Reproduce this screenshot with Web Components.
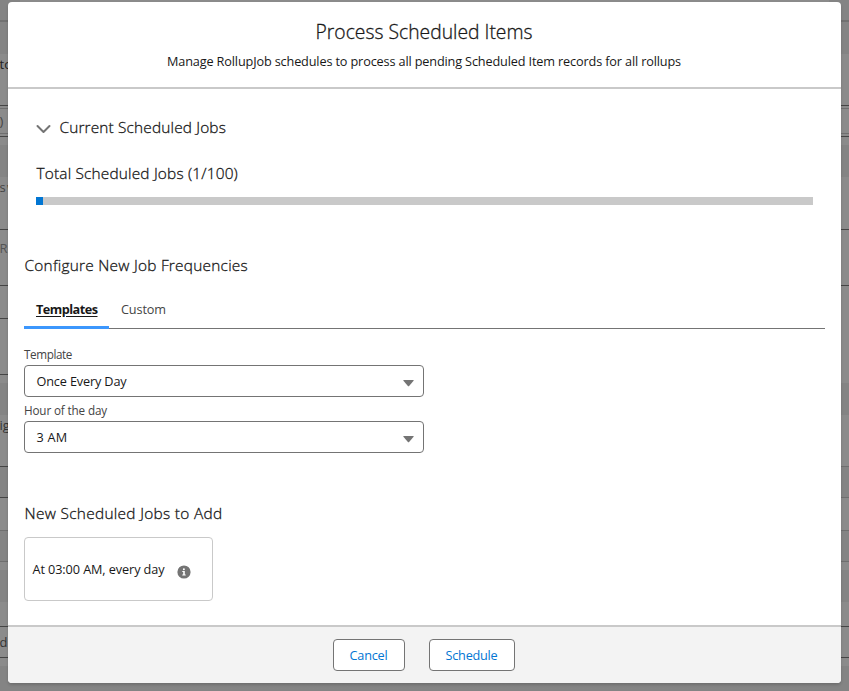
<!DOCTYPE html>
<html lang="en">
<head>
<meta charset="utf-8">
<title>Process Scheduled Items</title>
<style>
html,body{margin:0;height:100%;overflow:hidden}
body{font-family:"Open Sans","Noto Sans",sans-serif;font-size:12.7px;color:#181818;background:#8b8b8b}
</style>
</head>
<body>
<job-scheduler></job-scheduler>
<script>
// One line of text whose tracking is tuned to an intended width.
class TextRun extends HTMLElement {
  connectedCallback() {
    const root = this.attachShadow({mode: 'open'});
    root.innerHTML = '<style>:host{display:block;white-space:nowrap;width:max-content}span{display:inline-block}:host([underlined]) span{text-decoration:underline;text-underline-offset:2px;text-decoration-skip-ink:auto}</style><span><slot></slot></span>';
    const width = Number(this.getAttribute('width'));
    const natural = root.querySelector('span').getBoundingClientRect().width;
    if (width) {
      this.style.letterSpacing = ((width - natural) / this.textContent.length) + 'px';
      this.style.width = width + 'px';
    }
  }
}

// Dimmed page strip beside the dialog: a stack of rows.
class PageEdge extends HTMLElement {
  connectedCallback() {
    const left = this.getAttribute('side') === 'left';
    const a = '#8b8b8b', b = '#848484', dark = '#454545', mid = '#6f6f6f';
    const only = left ? dark : a, soft = left ? dark : mid;
    const rows = [[20,b],[2,'#717171'],[32,b],[20,a,'to','#222'],[31,a],[1,dark],[2,a],[1,mid],[24,a,')','#444'],[1,mid],[2,a],[1,dark],
      [8,a],[32,b],[20,a,'s w','#444'],[32,a],[1,dark],[8,a],[20,a,'R','#555'],[27,a],[1,dark],[32,a],[1,only],[55,a],[1,only],
      [8,a],[32,b],[20,a,'ig','#333'],[31,a],[1,soft],[30,b],[1,soft],[32,a],[1,mid],[30,b],[1,mid],[8,a],[32,b],
      [24,a],[1,dark],[30,a,'d','#333'],[1,dark],[8,a],[25,b]];
    this.attachShadow({mode: 'open'}).innerHTML = `<style>
      :host{display:block;width:20px;overflow:hidden}
      div{display:flex;align-items:center;white-space:nowrap;font-size:13px;line-height:18px;word-spacing:-2px;text-indent:-.5px}
      </style>` + rows.map(([h, bg, t, c]) =>
        `<div style="height:${h}px;background:${bg};color:${c || '#333'}">${left && t ? t : ''}</div>`).join('');
  }
}

class JobTab extends HTMLElement {
  connectedCallback() {
    this.attachShadow({mode: 'open'}).innerHTML = `<style>
      :host{display:flex;align-items:center;box-sizing:border-box;height:37px;padding:0 12px 1px;color:#444;border-bottom:3px solid transparent;margin-bottom:-1px}
      :host([active]){width:85px;color:#181818;font-weight:700;border-color:#3c97fd}
      </style><slot></slot>`;
  }
}

class SelectField extends HTMLElement {
  connectedCallback() {
    this.attachShadow({mode: 'open'}).innerHTML = `<style>
      :host{display:block;width:400px;height:56px}
      .label{line-height:18px;font-size:11.7px;color:#444;padding-top:4px;box-sizing:border-box;height:24px}
      .box{box-sizing:border-box;height:32px;border:1px solid #747474;border-radius:4px;background:#fff;padding:0 9px 0 11.5px;display:flex;align-items:center;justify-content:space-between}
      svg{display:block;margin-top:4px}
      </style><div class="label"><slot name="label"></slot></div>
      <div class="box"><slot></slot><svg width="11" height="7" viewBox="0 0 11 7"><path d="M.8 0h9.4q.8 0 .4.7L6.1 6q-.6.7-1.2 0L.4.7Q0 0 .8 0z" fill="#747474"/></svg></div>`;
  }
}

class ProgressBar extends HTMLElement {
  connectedCallback() {
    this.attachShadow({mode: 'open'}).innerHTML = `<style>
      :host{display:block;height:8px;background:#c9c9c9}
      div{height:8px;width:7px;background:#0176d3}
      </style><div></div>`;
  }
}

class ActionButton extends HTMLElement {
  connectedCallback() {
    this.attachShadow({mode: 'open'}).innerHTML = `<style>
      :host{display:block}
      button{box-sizing:border-box;height:32px;padding:0 16px;margin:0;border:1px solid #747474;border-radius:4px;background:#fff;color:#0176d3;font:inherit;display:flex;align-items:center}
      </style><button><slot></slot></button>`;
  }
}

class JobCard extends HTMLElement {
  connectedCallback() {
    this.attachShadow({mode: 'open'}).innerHTML = `<style>
      :host{box-sizing:border-box;display:flex;align-items:center;gap:12.5px;width:189px;height:64px;border:1px solid #c9c9c9;border-radius:4px;padding-left:7.5px}
      svg{display:block;margin-top:5px}
      </style><slot></slot><svg width="14" height="14" viewBox="0 0 14 14"><circle cx="7" cy="7" r="6.6" fill="#747474"/><circle cx="6.9" cy="4.3" r="1" fill="#fff"/><path d="M5.3 6.1h2.5v3.4h.9v.9H5.3v-.9h.9V7h-.9z" fill="#fff"/></svg>`;
  }
}

class JobScheduler extends HTMLElement {
  connectedCallback() {
    this.attachShadow({mode: 'open'}).innerHTML = `<style>
      :host{display:flex;justify-content:space-between;position:relative;width:849px;height:691px;background:linear-gradient(#8b8b8b 50%,#848484)}
      section{position:absolute;inset:2px 8px 8px;display:flex;flex-direction:column;background:#fff;border-radius:4px;overflow:hidden;box-shadow:0 2px 3px rgba(0,0,0,.16)}
      header{box-sizing:border-box;height:87px;border-bottom:2px solid #c9c9c9;display:flex;flex-direction:column;align-items:center;padding:15px 1px 0 0}
      h1,h2,p{margin:0;font-weight:400}
      h1,h2{font-weight:300;-webkit-text-stroke:.3px #181818}
      h1{font-size:19.3px;line-height:30px}
      header p{line-height:20px;margin-top:4px}
      h2{font-size:15.4px;line-height:24px}
      main{flex:1;padding:0 16px}
      .current{padding:27px 12px 0}
      .toggle{display:flex;align-items:center;gap:8.5px}
      .toggle svg{margin-top:1px}
      .current .total{margin-top:22px;margin-bottom:11px;padding-left:.5px}
      .inset{padding-left:.5px}
      .configure{margin-top:49px}
      nav{display:flex;height:36px;margin-top:14px;border-bottom:1px solid #747474}
      .fields{padding-top:12px}
      .new{margin-top:49px;margin-bottom:11px}
      footer{box-sizing:border-box;height:58px;border-top:2px solid #c9c9c9;background:#f3f3f3;display:flex;justify-content:center;align-items:center;gap:24px;padding-right:2px}
      </style>
      <page-edge side="left"></page-edge><page-edge side="right"></page-edge>
      <section>
        <header><h1><text-run width="217">Process Scheduled Items</text-run></h1>
        <p><text-run width="514">Manage RollupJob schedules to process all pending Scheduled Item records for all rollups</text-run></p></header>
        <main>
          <div class="current">
            <div class="toggle"><svg width="15" height="10" viewBox="0 0 15 10"><path d="M1.5 2 7.5 8l6-6" fill="none" stroke="#747474" stroke-width="2" stroke-linecap="round" stroke-linejoin="round"/></svg>
            <h2><text-run width="166.5">Current Scheduled Jobs</text-run></h2></div>
            <h2 class="total"><text-run width="201.5">Total Scheduled Jobs (1/100)</text-run></h2>
            <progress-bar></progress-bar>
          </div>
          <h2 class="configure inset"><text-run width="223.5">Configure New Job Frequencies</text-run></h2>
          <nav><job-tab active><text-run underlined width="61.5">Templates</text-run></job-tab><job-tab><text-run width="45">Custom</text-run></job-tab></nav>
          <div class="fields">
            <select-field><text-run slot="label" width="48">Template</text-run><text-run width="90">Once Every Day</text-run></select-field>
            <select-field><text-run slot="label" width="83">Hour of the day</text-run><text-run width="31">3 AM</text-run></select-field>
          </div>
          <h2 class="new inset"><text-run width="198">New Scheduled Jobs to Add</text-run></h2>
          <job-card><text-run width="132">At 03:00 AM, every day</text-run></job-card>
        </main>
        <footer><action-button><text-run width="38">Cancel</text-run></action-button><action-button><text-run width="52">Schedule</text-run></action-button></footer>
      </section>`;
  }
}
customElements.define('page-edge', PageEdge);
customElements.define('job-tab', JobTab);
customElements.define('select-field', SelectField);
customElements.define('progress-bar', ProgressBar);
customElements.define('action-button', ActionButton);
customElements.define('job-card', JobCard);
customElements.define('job-scheduler', JobScheduler);
customElements.define('text-run', TextRun);
</script>
</body>
</html>
